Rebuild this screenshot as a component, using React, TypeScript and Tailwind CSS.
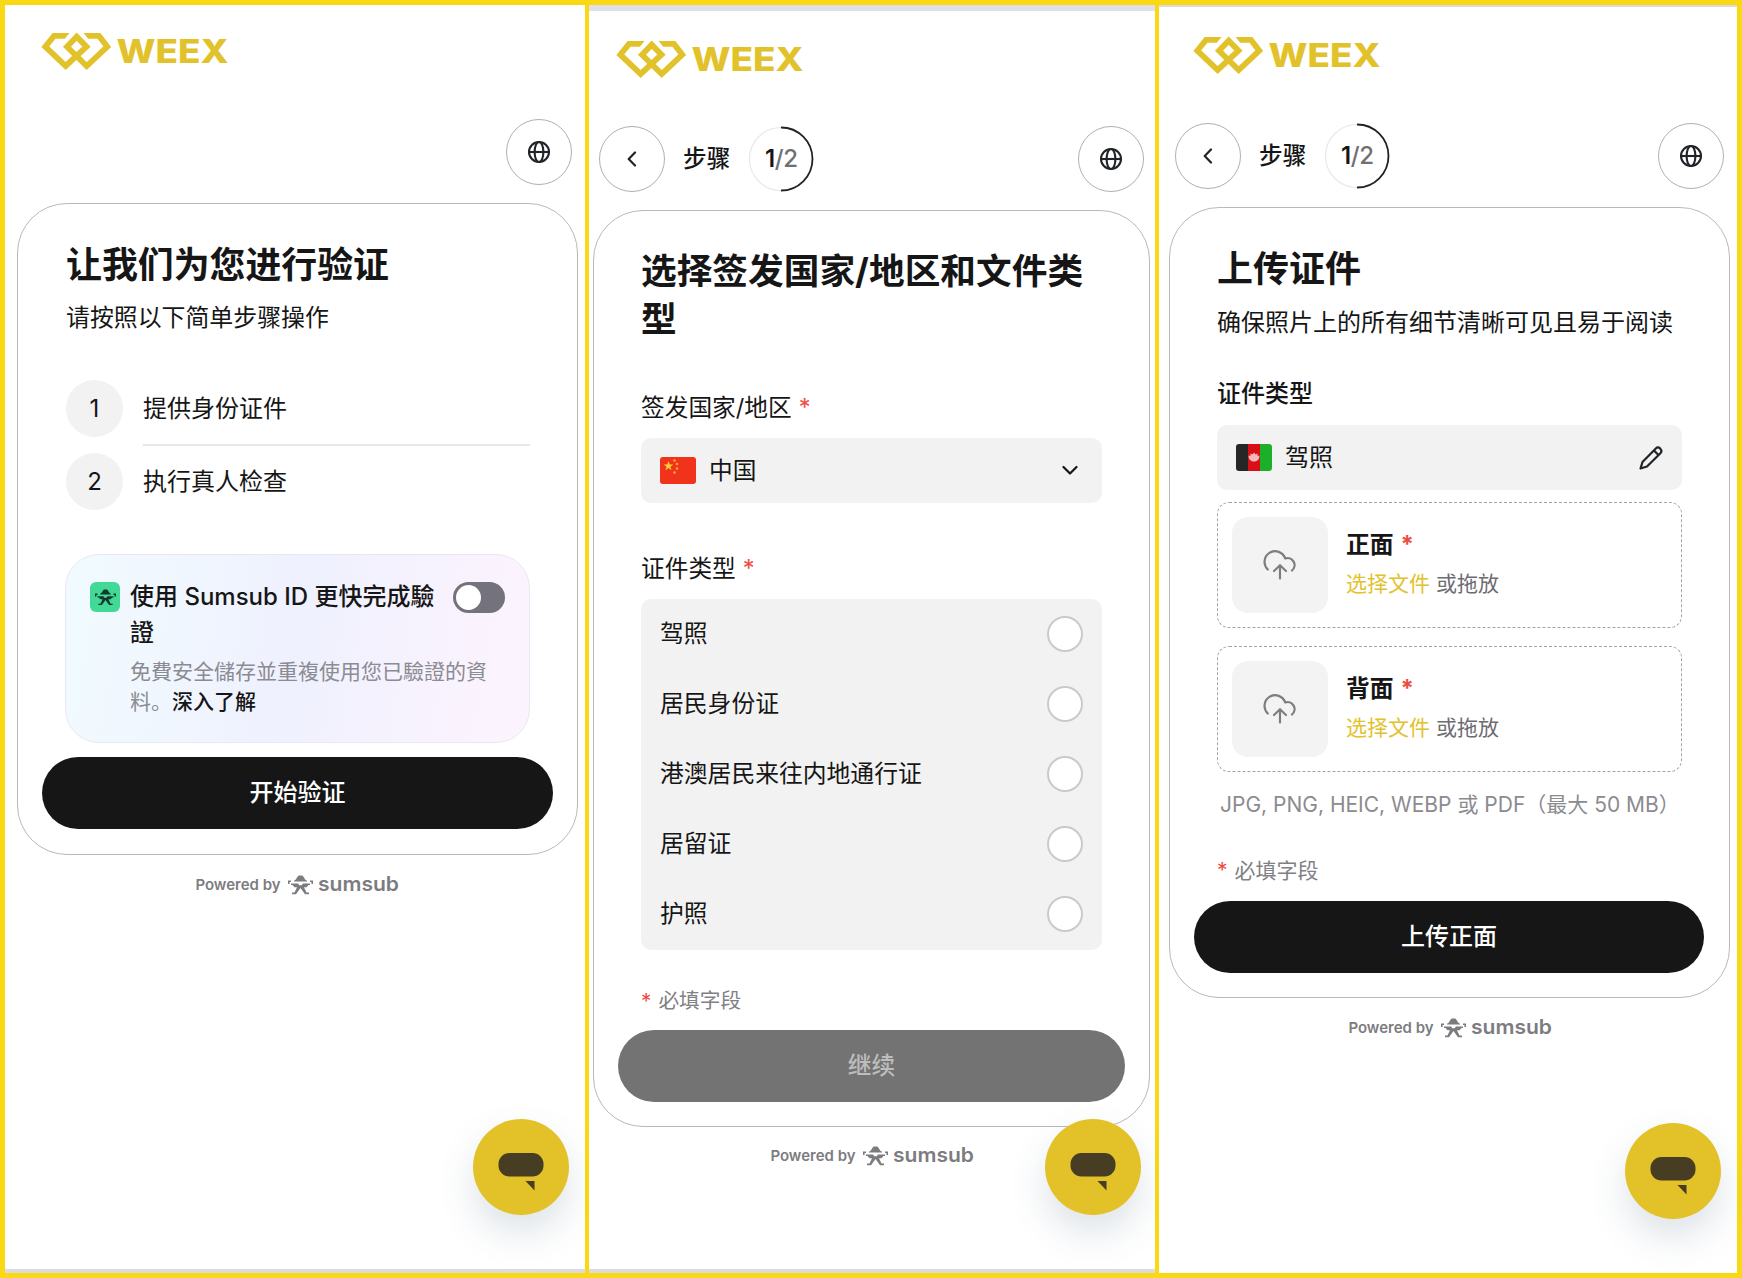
import { ReactNode } from "react";

const Logo = () => (
  <svg width="190" height="42" viewBox="0 0 190 42" className="block">
    <path
      d="M25 5.900H14L5.300 16.700L25.700 36L46.500 16.700L36.700 6.700L27 16.700L46.700 36L67.300 16.700L59 5.900H48"
      fill="none"
      stroke="#e2c22b"
      strokeWidth="5.800"
    />
    <path d="M24.800 3H29.600L24.800 8.800ZM48.200 3H43.600L48.200 8.800Z" fill="#e2c22b" />
    <text x="76.500" y="32.800" fill="#e2c22b" fontFamily="Inter, sans-serif" fontSize="32" fontWeight="800" textLength="112" lengthAdjust="spacingAndGlyphs">
      WEEX
    </text>
  </svg>
);

const SumsubMark = ({ size }: { size: number }) => (
  <svg width={size} height={size * 0.8} viewBox="0 0 25 20" fill="currentColor">
    <path d="M6 5.800C8.500 5 9 1 11 .5H14C16 1 16.500 5 19 5.800V6.600H6Z" />
    <path d="M0 5.500H3V7H1.600V9H0ZM25 5.500H22V7H23.400V9H25Z" />
    <path d="M3 8.500H10L11.300 10.300H13.700L15 8.500H22V10H20.500L18.500 12.300H16L18.500 17.500H21V19.300H17L12.500 13L8 19.300H4V17.500H6.500L9 12.300H6.500L4.500 10H3Z" />
  </svg>
);

const GlobeIcon = () => (
  <svg width="24" height="24" viewBox="0 0 24 24" fill="none" stroke="#202327" strokeWidth="2.100">
    <circle cx="12" cy="12" r="10" />
    <ellipse cx="12" cy="12" rx="4.400" ry="10" />
    <path d="M2 12H22" />
  </svg>
);

const PencilIcon = () => (
  <svg width="26" height="26" viewBox="0 0 26 26" fill="none" stroke="#202327" strokeWidth="2.200" strokeLinejoin="round">
    <path d="M2.500 23.500L4.500 17L17.800 3.500C19 2.300 20.800 2.300 22 3.400L22.500 4C23.600 5.200 23.600 7 22.400 8.200L9 21.500Z" />
    <path d="M16 5.500L20.500 10" />
  </svg>
);

const UploadIcon = () => (
  <svg width="34" height="31" viewBox="0 0 34 31" fill="none" stroke="#7d7d82" strokeWidth="2.200" strokeLinecap="round" strokeLinejoin="round" className="-mt-0.5">
    <path d="M4.800 20.500A10.600 10.600 0 1 1 22.200 9.500A7 7 0 0 1 29 21.500" />
    <path d="M17 29.500V16.500M11 22L17 16.200L23 22" />
  </svg>
);

const ChinaFlag = () => (
  <svg width="36" height="27" viewBox="0 0 36 27">
    <rect width="36" height="27" rx="3" fill="#f0331a" />
    <path d="M8.500 4L9.700 7.500H13.300L10.400 9.700L11.500 13.300L8.500 11.100L5.500 13.300L6.600 9.700L3.700 7.500H7.300Z" fill="#fcd03c" />
    <g fill="#f7a637">
      <circle cx="14.500" cy="3.500" r="1.300" />
      <circle cx="17" cy="7" r="1.300" />
      <circle cx="17" cy="11.500" r="1.300" />
      <circle cx="14.500" cy="15.500" r="1.300" />
    </g>
  </svg>
);

const AfghanFlag = () => (
  <svg width="36" height="27" viewBox="0 0 36 27" className="rounded-[3px]">
    <rect width="12" height="27" fill="#262626" />
    <rect x="12" width="12" height="27" fill="#d80f17" />
    <rect x="24" width="12" height="27" fill="#1cb02a" />
    <path d="M12.500 11.500L14.500 12L14.500 9.500L16.500 10.500L18 8.500L19.500 10.500L21.500 9.500L21.500 12L23.500 11.500C23.500 15 21.500 17.500 18 17.500S12.500 15 12.500 11.500Z" fill="#f6b9bb" />
  </svg>
);

const CircleButton = ({ children }: { children: ReactNode }) => (
  <button className="flex size-[66px] items-center justify-center rounded-full border border-[#b0b0b0]">
    {children}
  </button>
);

const Required = () => <span className="ml-[7px] text-[#ee4c42]">*</span>;

const StepBar = () => (
  <div className="flex items-center">
    <CircleButton>
      <svg width="10" height="16" viewBox="0 0 10 16" fill="none" stroke="#202327" strokeWidth="2.200" strokeLinecap="round" strokeLinejoin="round">
        <path d="M8 1.500L1.700 8L8 14.500" />
      </svg>
    </CircleButton>
    <span className="ml-[18px] text-[23.7px] font-medium">步骤</span>
    <div className="relative ml-[18px] flex size-[66px] items-center justify-center text-2xl font-semibold tracking-[-0.3px]">
      <svg className="absolute inset-0" width="66" height="66" viewBox="0 0 66 66" fill="none">
        <circle cx="33" cy="33" r="31.500" stroke="#e8e8e8" strokeWidth="1.200" />
        <path d="M33 1.500A31.500 31.500 0 0 1 33 64.500" stroke="#222" strokeWidth="1.800" />
      </svg>
      <span>1</span>
      <span className="font-medium text-[#6f6f74]">/2</span>
    </div>
  </div>
);

const PoweredBy = () => (
  <div className="flex h-6 items-center justify-center text-[#7c7c80]">
    <span className="text-[15px] font-semibold">Powered by</span>
    <span className="ml-[7px]">
      <SumsubMark size={25} />
    </span>
    <svg width="81" height="30" viewBox="0 0 81 30" className="ml-[5px]">
      <text x="0" y="20.500" fill="currentColor" fontFamily="Inter, sans-serif" fontSize="20" fontWeight="600" textLength="81" lengthAdjust="spacingAndGlyphs">
        sumsub
      </text>
    </svg>
  </div>
);

const ChatBubble = () => (
  <div className="flex size-24 justify-center rounded-full bg-[#e2c228] pt-[34px] shadow-[0_18px_36px_rgba(60,90,110,0.17)]">
    <svg width="46" height="38" viewBox="0 0 46 38" fill="#463d22">
      <rect x="0.500" y="0" width="45" height="23.500" rx="11" />
      <path d="M27.500 28H36.500V37.500Z" />
    </svg>
  </div>
);

const steps = ["提供身份证件", "执行真人检查"];

const IntroScreen = () => (
  <section className="relative w-[580px] bg-white">
    <div className="pt-[25px] pl-[35px]">
      <Logo />
    </div>
    <div className="mt-[47px] flex justify-end pr-[13px]">
      <CircleButton>
        <GlobeIcon />
      </CircleButton>
    </div>
    <div className="mt-[18px] mr-[7px] ml-3 h-[652px] rounded-[50px] border border-[#b9b9b9] pt-[37px]">
      <h1 className="ml-12 text-[35.9px] leading-[48px] font-bold">让我们为您进行验证</h1>
      <p className="mt-[11px] ml-12 text-[23.9px] leading-9">请按照以下简单步骤操作</p>
      <div className="mt-[44px] mr-[47px] ml-12">
        {steps.map((step, i) => (
          <div key={step} className="flex">
            <div className={i === 0 ? "h-[73px]" : "pt-0"}>
              <span className="flex size-[57px] items-center justify-center rounded-full bg-[#f2f2f2] text-2xl">
                {i + 1}
              </span>
            </div>
            <div className={i === 0 ? "ml-5 h-[66px] flex-1 border-b-2 border-[#e8e8ea]" : "ml-5 flex-1"}>
              <p className="text-2xl leading-[57px]">{step}</p>
            </div>
          </div>
        ))}
      </div>
      <div className="mt-11 mr-[47px] ml-[47px] flex h-[189px] rounded-[34px] border border-[#e7e8f2] bg-[linear-gradient(100deg,#f1fbff_0%,#eff1fe_50%,#fbf3fe_90%)] pt-[27px] pl-6">
        <span className="flex size-[30px] items-center justify-center rounded-md bg-[#41d995] text-[#15382d]">
          <SumsubMark size={21} />
        </span>
        <div className="ml-[10px] w-[365px] pt-px">
          <div className="flex justify-between">
            <h2 className="-mt-[4px] w-[310px] text-2xl leading-9 font-medium">使用 Sumsub ID 更快完成驗證</h2>
            <button className="-mt-px -mr-[10px] h-[31px] w-[52px] rounded-full bg-[#74737d] p-[3px]">
              <span className="block size-[25px] rounded-full bg-white" />
            </button>
          </div>
          <p className="mt-[6px] text-[21px] leading-[30px] text-[#8b8b92]">
            免費安全儲存並重複使用您已驗證的資料。
            <span className="font-medium text-[#161616]">深入了解</span>
          </p>
        </div>
      </div>
      <button className="mt-[14px] ml-6 h-[72px] w-[511px] rounded-full bg-[#161616] text-2xl font-medium text-white">
        开始验证
      </button>
    </div>
    <div className="mt-[18px] pl-1">
      <PoweredBy />
    </div>
    <div className="absolute right-4 bottom-[58px]">
      <ChatBubble />
    </div>
    <div className="absolute inset-x-0 bottom-0 h-1 bg-[#dcdbe0]" />
  </section>
);

const documents = ["驾照", "居民身份证", "港澳居民来往内地通行证", "居留证", "护照"];

const DocumentScreen = () => (
  <section className="relative w-[566px] bg-white">
    <div className="absolute inset-x-0 top-0 h-1.5 bg-[#dde0e6]" />
    <div className="pt-[33px] pl-[26px]">
      <Logo />
    </div>
    <div className="mt-[46px] flex justify-between pr-[11px] pl-[10px]">
      <StepBar />
      <CircleButton>
        <GlobeIcon />
      </CircleButton>
    </div>
    <div className="mt-[18px] mr-[5px] ml-1 h-[917px] rounded-[50px] border border-[#b9b9b9] pt-9">
      <div className="mx-[47px]">
        <h1 className="text-[35.7px] leading-[48px] font-bold">选择签发国家/地区和文件类型</h1>
        <p className="mt-[47px] text-[23.7px] leading-9">
          签发国家/地区
          <Required />
        </p>
        <div className="mt-3 flex h-[65px] items-center rounded-[10px] bg-[#f2f2f2] pr-6 pl-[19px]">
          <ChinaFlag />
          <span className="ml-[13px] flex-1 text-[23.7px]">中国</span>
          <svg width="16" height="11" viewBox="0 0 16 11" fill="none" stroke="#161616" strokeWidth="2.200" strokeLinecap="round" strokeLinejoin="round">
            <path d="M1.500 2L8 8.500L14.500 2" />
          </svg>
        </div>
        <p className="mt-12 text-[23.7px] leading-9">
          证件类型
          <Required />
        </p>
        <ul className="mt-3 rounded-[10px] bg-[#f2f2f2] pr-[19px] pb-px pl-[19px]">
          {documents.map((name) => (
            <li key={name} className="flex h-[70px] items-center justify-between text-[23.8px]">
              {name}
              <span className="size-9 rounded-full border-2 border-[#cacaca] bg-white" />
            </li>
          ))}
        </ul>
        <p className="mt-9 text-[20.7px] leading-[30px] text-[#808085]">
          <span className="mr-[7px] text-[#ee4c42]">*</span>必填字段
        </p>
      </div>
      <button className="mt-[14px] ml-6 h-[72px] w-[507px] rounded-full bg-[#737373] text-[23.7px] font-medium text-[#bdbdbd]">
        继续
      </button>
    </div>
    <div className="mt-[17px]">
      <PoweredBy />
    </div>
    <div className="absolute right-[14px] bottom-[58px]">
      <ChatBubble />
    </div>
    <div className="absolute inset-x-0 bottom-0 h-1 bg-[#dcdbe0]" />
  </section>
);

const UploadBox = ({ title }: { title: string }) => (
  <div className="flex h-[126px] rounded-xl border border-dashed border-[#a4a4a4] pt-[14px] pl-[14px]">
    <div className="flex size-24 items-center justify-center rounded-2xl bg-[#f3f3f3]">
      <UploadIcon />
    </div>
    <div className="ml-[18px] pt-[10px]">
      <p className="text-[23.8px] leading-9 font-bold">
        {title}
        <Required />
      </p>
      <p className="mt-[6px] text-[21px] leading-[30px] text-[#6c6c72]">
        <span className="text-[#e2c22b]">选择文件</span> 或拖放
      </p>
    </div>
  </div>
);

const UploadScreen = () => (
  <section className="relative w-[578px] bg-white">
    <div className="absolute inset-x-0 top-0 h-0.5 bg-[#dcdbe0]" />
    <div className="pt-[29px] pl-[33px]">
      <Logo />
    </div>
    <div className="mt-[47px] flex justify-between pr-[13px] pl-4">
      <StepBar />
      <CircleButton>
        <GlobeIcon />
      </CircleButton>
    </div>
    <div className="mt-[18px] mr-[7px] ml-[10px] h-[791px] rounded-[50px] border border-[#b9b9b9] pt-[37px]">
      <div className="mr-[47px] ml-[47px]">
        <h1 className="text-4xl leading-[48px] font-bold">上传证件</h1>
        <p className="mt-[12px] text-2xl leading-9">确保照片上的所有细节清晰可见且易于阅读</p>
        <p className="mt-[35px] text-2xl leading-9 font-medium">证件类型</p>
        <div className="mt-[13px] flex h-[65px] items-center rounded-[10px] bg-[#f2f2f2] pr-[18px] pl-[19px]">
          <AfghanFlag />
          <span className="ml-[13px] flex-1 text-2xl">驾照</span>
          <PencilIcon />
        </div>
        <div className="mt-[12px] flex flex-col gap-[18px]">
          <UploadBox title="正面" />
          <UploadBox title="背面" />
        </div>
        <p className="mt-[18px] ml-[3px] text-[21px] leading-[30px] whitespace-nowrap text-[#8b8b90]">
          JPG, PNG, HEIC, WEBP 或 PDF（最大 50 MB）
        </p>
        <p className="mt-9 text-[21px] leading-[30px] text-[#808085]">
          <span className="mr-[7px] text-[#ee4c42]">*</span>必填字段
        </p>
      </div>
      <button className="mt-[15px] ml-6 h-[72px] w-[510px] rounded-full bg-[#161616] text-2xl font-medium text-white">
        上传正面
      </button>
    </div>
    <div className="mt-[18px] pl-1">
      <PoweredBy />
    </div>
    <div className="absolute right-4 bottom-[54px]">
      <ChatBubble />
    </div>
  </section>
);

const App = () => {
  return (
    <main className="flex h-[1278px] w-[1742px] gap-1 bg-[#fad914] p-[5px] font-['Inter','Noto_Sans_CJK_SC',sans-serif] text-[#161616]">
      <IntroScreen />
      <DocumentScreen />
      <UploadScreen />
    </main>
  );
};

export default App;
